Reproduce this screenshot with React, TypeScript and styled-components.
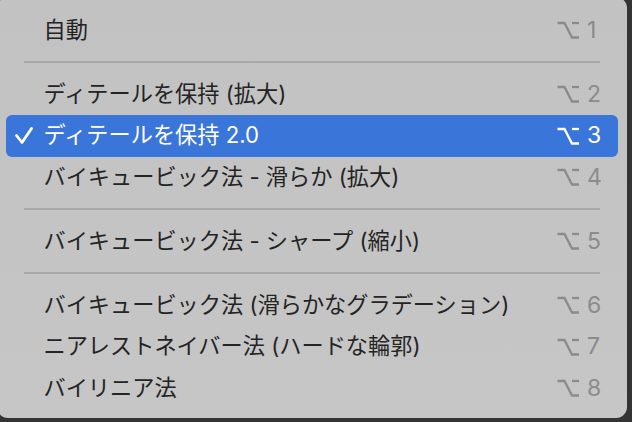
import React from "react";
import styled, { createGlobalStyle } from "styled-components";

const GlobalStyle = createGlobalStyle`
    html, body {
        margin: 0;
        padding: 0;
        background: #343434;
        overflow: hidden;
    }
    body {
        width: 632px;
        height: 422px;
        font-family: "Inter", "Noto Sans CJK JP", sans-serif;
    }
`

type Item =
    | { kind: "item"; label: string; key: string; checked?: boolean }
    | { kind: "sep" }

const items: Item[] = [
    { kind: "item", label: "自動", key: "1" },
    { kind: "sep" },
    { kind: "item", label: "ディテールを保持 (拡大)", key: "2" },
    { kind: "item", label: "ディテールを保持 2.0", key: "3", checked: true },
    { kind: "item", label: "バイキュービック法 - 滑らか (拡大)", key: "4" },
    { kind: "sep" },
    { kind: "item", label: "バイキュービック法 - シャープ (縮小)", key: "5" },
    { kind: "sep" },
    { kind: "item", label: "バイキュービック法 (滑らかなグラデーション)", key: "6" },
    { kind: "item", label: "ニアレストネイバー法 (ハードな輪郭)", key: "7" },
    { kind: "item", label: "バイリニア法", key: "8" },
]

const OptionKey = ({ color }: { color: string }) => (
    <svg width="22" height="18" viewBox="0 0 22 18" fill="none">
        <path d="M0.5 2 H7.5 L15 16.5 H22" stroke={color} strokeWidth="2.3" />
        <path d="M15 2 H22" stroke={color} strokeWidth="2.3" />
    </svg>
)

const Check = () => (
    <svg width="18" height="18" viewBox="0 0 18 18" fill="none">
        <path d="M1.5 8.5 L7 15.5 L16.5 1.5" stroke="#fff" strokeWidth="2.8" strokeLinecap="round" strokeLinejoin="round" />
    </svg>
)

export default function App() {
    return (
        <>
            <GlobalStyle />
            <Menu>
                {items.map((item, i) =>
                    item.kind === "sep" ? (
                        <Separator key={i} />
                    ) : (
                        <Row key={i} $active={!!item.checked}>
                            <CheckSlot>{item.checked && <Check />}</CheckSlot>
                            <Label>{item.label}</Label>
                            <Shortcut $active={!!item.checked}>
                                <OptionKey color={item.checked ? "#ffffff" : "#8b8b8b"} />
                                <Digit>{item.key}</Digit>
                            </Shortcut>
                        </Row>
                    )
                )}
            </Menu>
        </>
    )
}

const Menu = styled.div`
    margin: -3px 0 0 -3px;
    width: 630px;
    height: 421px;
    box-sizing: border-box;
    padding-top: 12.5px;
    background: linear-gradient(180deg, #c2c2c2 0%, #c6c6c6 100%);
    border-radius: 11px;
    display: flex;
    flex-direction: column;
`

const Row = styled.div<{ $active: boolean }>`
    height: 41.5px;
    margin: 0 9px;
    display: flex;
    align-items: center;
    border-radius: 6px;
    background: ${p => (p.$active ? "#3a75d9" : "transparent")};
    color: ${p => (p.$active ? "#ffffff" : "#242424")};
`

const CheckSlot = styled.div`
    width: 37.5px;
    padding-left: 9px;
    box-sizing: border-box;
    display: flex;
    align-items: center;
    height: 18px;
`

const Label = styled.div`
    flex: 1;
    font-size: 22.2px;
    line-height: 1;
    white-space: nowrap;
    padding-bottom: 1px;
`

const Shortcut = styled.div<{ $active: boolean }>`
    display: flex;
    align-items: center;
    gap: 8px;
    padding-right: 18px;
    color: ${p => (p.$active ? "#ffffff" : "#8b8b8b")};
`

const Digit = styled.span`
    width: 13px;
    font-size: 23px;
    line-height: 1;
`

const Separator = styled.div`
    height: 22.5px;
    margin: 0 27px;
    display: flex;
    align-items: center;
    &::after {
        content: "";
        flex: 1;
        height: 2px;
        background: #a9a9a9;
    }
`
